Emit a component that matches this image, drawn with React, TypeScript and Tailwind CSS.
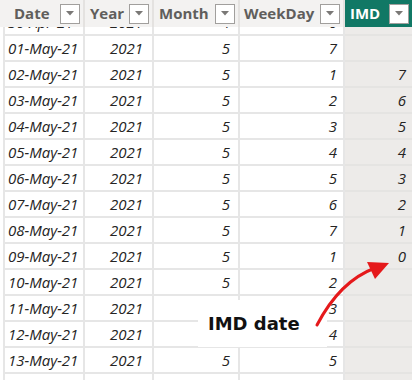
const rows = [
  { date: "30-Apr-21", month: "4", week: "6", imd: "" },
  { date: "01-May-21", month: "5", week: "7", imd: "" },
  { date: "02-May-21", month: "5", week: "1", imd: "7" },
  { date: "03-May-21", month: "5", week: "2", imd: "6" },
  { date: "04-May-21", month: "5", week: "3", imd: "5" },
  { date: "05-May-21", month: "5", week: "4", imd: "4" },
  { date: "06-May-21", month: "5", week: "5", imd: "3" },
  { date: "07-May-21", month: "5", week: "6", imd: "2" },
  { date: "08-May-21", month: "5", week: "7", imd: "1" },
  { date: "09-May-21", month: "5", week: "1", imd: "0" },
  { date: "10-May-21", month: "5", week: "2", imd: "" },
  { date: "11-May-21", month: "5", week: "3", imd: "" },
  { date: "12-May-21", month: "5", week: "4", imd: "" },
  { date: "13-May-21", month: "5", week: "5", imd: "" },
  { date: "", month: "", week: "", imd: "" },
];

const cols = "grid grid-cols-[85px_69px_86px_105px_67px_5px]";

function Drop() {
  return (
    <span className="flex h-[20px] w-[20px] items-center justify-center border border-[#a19f9d] bg-white">
      <svg width="8" height="5" viewBox="0 0 8 5">
        <path d="M0 0h8L4 4.5z" fill="#7a7876" />
      </svg>
    </span>
  );
}

function Head({ label, pl, active }: { label: string; pl: string; active?: boolean }) {
  return (
    <div
      className={`flex items-center justify-between pr-[3px] ${pl} ${
        active ? "bg-[#117865] text-white" : "border-r-2 border-[#e4e2e0] text-[#605e5c]"
      }`}
    >
      <span className="text-[15px] font-bold leading-none">{label}</span>
      <Drop />
    </div>
  );
}

export default function App() {
  return (
    <div className="relative h-[380px] w-[417px] overflow-hidden bg-white font-['Open_Sans',sans-serif]">
      <div className={`${cols} relative z-10 h-[27px] bg-[#f3f2f1]`}>
        <Head label="Date" pl="pl-[14px]" />
        <Head label="Year" pl="pl-[5px]" />
        <Head label="Month" pl="pl-[5px]" />
        <Head label="WeekDay" pl="pl-[4px]" />
        <Head label="IMD" pl="pl-[5px]" active />
        <div className="bg-white" />
      </div>
      <div className="h-[353px] overflow-hidden">
        <div className="-mt-[17px] text-[15px] italic text-[#252423]">
          {rows.map((r, i) => (
            <div key={i} className={`${cols} h-[26px]`}>
              <div className="ml-[3px] flex items-center border-b-2 border-l-2 border-r-2 border-[#e6e6e6] pl-[3px]">
                {r.date}
              </div>
              <div className="flex items-center justify-end border-b-2 border-r-2 border-[#e6e6e6] pr-[9px]">
                {r.date ? "2021" : ""}
              </div>
              <div className="flex items-center justify-end border-b-2 border-r-2 border-[#e6e6e6] pr-[8px]">
                {r.month}
              </div>
              <div className="flex items-center justify-end border-b-2 border-r-2 border-[#e6e6e6] pr-[6px]">
                {r.week}
              </div>
              <div className="flex items-center justify-end border-b-2 border-[#e5e4e2] bg-[#edebe9] pr-[6px]">
                {r.imd}
              </div>
              <div className="bg-white" />
            </div>
          ))}
        </div>
      </div>

      <div className="absolute left-[198px] top-[300px] flex h-[47px] w-[129px] items-center bg-white pl-[10px]">
        <span className="font-['DejaVu_Sans',sans-serif] text-[18px] font-bold leading-none text-[#111]">
          IMD date
        </span>
      </div>

      <svg className="absolute left-0 top-0" width="417" height="380" viewBox="0 0 417 380">
        <path d="M317 325 Q340 281 375 268" fill="none" stroke="#e5191b" strokeWidth="3" strokeLinecap="round" />
        <path d="M389 263 L367 262 L375 279 Z" fill="#e5191b" />
      </svg>
    </div>
  );
}
